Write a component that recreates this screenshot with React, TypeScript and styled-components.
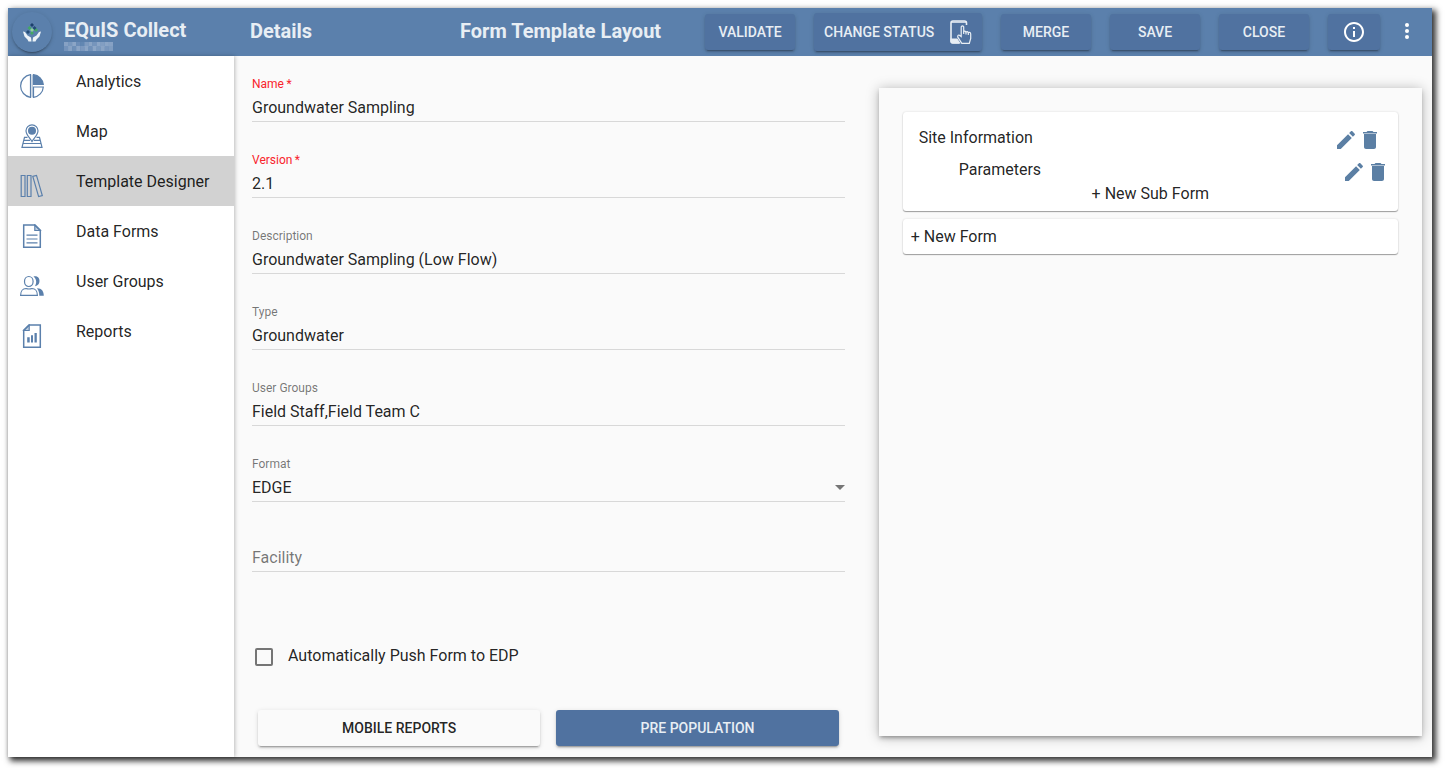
import React from 'react';
import styled, { createGlobalStyle, css } from 'styled-components';

const blue = '#5b80ac';
const buttonBlue = '#5072a0';
const ink = 'rgba(0, 0, 0, 0.87)';
const raised = `0 3px 1px -2px rgba(0, 0, 0, 0.2), 0 2px 2px 0 rgba(0, 0, 0, 0.14),
  0 1px 5px 0 rgba(0, 0, 0, 0.12)`;

const GlobalStyle = createGlobalStyle`
  *, *::before, *::after { box-sizing: border-box; }
  body {
    margin: 0;
    background: #fff;
    color: ${ink};
    font-family: Roboto, 'Liberation Sans', sans-serif;
    font-size: 16px;
  }
  button, input, select { font: inherit; color: inherit; }
`;

const Window = styled.div`
  display: flex;
  flex-direction: column;
  min-height: calc(100vh - 24px);
  margin: 8px 16px 16px 8px;
  background: #fafafa;
  box-shadow: 3px 3px 6px 1px rgba(0, 0, 0, 0.8);
`;

const Header = styled.header`
  display: flex;
  align-items: center;
  height: 48px;
  background: ${blue};
  color: #e8eef4;
`;

const Brand = styled.div`
  display: flex;
  align-items: center;
  flex: 0 0 226px;
  gap: 12px;
  padding-left: 4px;
`;

const Logo = styled.div`
  display: grid;
  place-items: center;
  width: 40px;
  height: 40px;
  border-radius: 50%;
  box-shadow: ${raised};
`;

const BrandText = styled.div`
  display: flex;
  flex-direction: column;
  gap: 1px;
  padding-top: 5px;
`;

const Title = styled.h1`
  margin: 0;
  font-size: 20px;
  line-height: 22px;
  font-weight: 700;
  white-space: nowrap;
`;

const SectionTitle = styled(Title).attrs({ as: 'h2' })`
  padding-bottom: 2px;
`;

const DetailsTitle = styled(SectionTitle)`
  flex: 0 0 226px;
  padding-left: 16px;
`;

const LayoutTitle = styled(SectionTitle)`
  flex: 1;
`;

const Actions = styled.div`
  display: flex;
  align-items: center;
  gap: 19px;
  padding-right: 17px;
`;

const Button = styled.button<{ $tone?: 'plain'; $width?: number }>`
  display: flex;
  align-items: center;
  justify-content: center;
  height: 36px;
  ${(p) => (p.$width ? css`width: ${p.$width}px;` : css`flex: 1;`)}
  padding: 0 10px;
  border: 0;
  border-radius: 3px;
  background: ${(p) => (p.$tone === 'plain' ? '#fafafa' : buttonBlue)};
  color: ${(p) => (p.$tone === 'plain' ? ink : '#e8eef4')};
  font-size: 14px;
  font-weight: 500;
  white-space: nowrap;
  box-shadow: ${raised};
`;

const StatusButton = styled(Button)`
  justify-content: space-between;
  height: 38px;
`;

const MenuButton = styled.button`
  display: grid;
  place-items: center;
  width: 16px;
  height: 26px;
  padding: 0 0 2px;
  border: 0;
  background: none;
`;

const Body = styled.div`
  display: flex;
  flex: 1;
`;

const Sidebar = styled.nav`
  flex: 0 0 226px;
  background: #fff;
  box-shadow: 1px 0 4px rgba(0, 0, 0, 0.25);
`;

const NavItem = styled.a<{ $active?: boolean }>`
  display: flex;
  align-items: center;
  gap: 32px;
  height: 50px;
  padding-left: 12px;
  background: ${(p) => (p.$active ? '#d2d2d2' : 'transparent')};
  color: ${ink};
  text-decoration: none;

  svg { margin-top: 10px; }
`;

const Main = styled.main`
  display: grid;
  grid-template-columns: 12fr 11fr;
  gap: 34px;
  flex: 1;
  padding: 0 10px 11px 18px;
`;

const Form = styled.form`
  display: flex;
  flex-direction: column;
  padding-top: 20px;
`;

const Field = styled.div`
  display: flex;
  flex-direction: column;
  margin-bottom: 30px;
`;

const Label = styled.label<{ $required?: boolean }>`
  font-size: 12px;
  line-height: 16px;
  color: ${(p) => (p.$required ? '#f8242c' : 'rgba(0, 0, 0, 0.54)')};
`;

const control = css`
  width: 100%;
  height: 30px;
  padding: 2px 0 0;
  border: 0;
  border-bottom: 1px solid #d8d8d8;
  border-radius: 0;
  outline: 0;
  background: transparent;
  appearance: none;
`;

const Input = styled.input`
  ${control}
  &::placeholder { color: rgba(0, 0, 0, 0.54); opacity: 1; }
`;

const SelectWrap = styled.div`
  display: grid;
  align-items: center;

  > * { grid-area: 1 / 1; }
  > svg { justify-self: end; pointer-events: none; }
`;

const Select = styled.select`${control}`;

const Facility = styled.div`
  margin: 10px 0 74px;
`;

const CheckRow = styled.label`
  display: flex;
  align-items: center;
  gap: 15px;
  padding-left: 3px;
  line-height: 20px;
`;

const Checkbox = styled.input.attrs({ type: 'checkbox' })`
  width: 18px;
  height: 18px;
  margin: 2px 0 0;
  border: 2px solid #757575;
  border-radius: 2px;
  background: transparent;
  appearance: none;
`;

const FormButtons = styled.div`
  display: flex;
  gap: 16px;
  margin-top: auto;
  padding: 0 6px;
`;

const Panel = styled.section`
  display: flex;
  flex-direction: column;
  gap: 8px;
  margin: 32px 0 10px;
  padding: 24px;
  background: #fafafa;
  box-shadow: 0 3px 3px -2px rgba(0, 0, 0, 0.2), 0 3px 4px 0 rgba(0, 0, 0, 0.14),
    0 1px 12px 0 rgba(0, 0, 0, 0.28);
`;

const Card = styled.div`
  display: flex;
  flex-direction: column;
  padding: 16px 8px 7px 16px;
  border-radius: 3px;
  background: #fff;
  box-shadow: 0 1px 1px rgba(0, 0, 0, 0.35), 0 0 2px rgba(0, 0, 0, 0.15);
`;

const FormRow = styled.div<{ $sub?: boolean }>`
  display: flex;
  height: 24px;
  margin-bottom: ${(p) => (p.$sub ? 0 : 8)}px;
  padding: ${(p) => (p.$sub ? '0 0 0 40px' : '0 8px 0 0')};
  line-height: 20px;
`;

const RowName = styled.span`
  flex: 1;
`;

const IconButton = styled.button`
  display: flex;
  width: 24px;
  height: 24px;
  padding: 0;
  border: 0;
  background: none;
`;

const LinkButton = styled.button`
  padding: 0;
  border: 0;
  background: none;
  line-height: 20px;
`;

const SubFormButton = styled(LinkButton)`
  align-self: center;
  margin-right: 8px;
`;

const NewFormButton = styled(LinkButton)`
  height: 35px;
  padding: 0 8px;
  border-radius: 3px;
  background: #fff;
  text-align: left;
  box-shadow: 0 1px 1px rgba(0, 0, 0, 0.35), 0 0 2px rgba(0, 0, 0, 0.15);
`;

const NavIcon = ({ children }: { children: React.ReactNode }) => (
  <svg width="24" height="24" viewBox="0 0 24 24" fill="none" stroke={blue} strokeWidth="1.2" aria-hidden="true">
    {children}
  </svg>
);

const navItems = [
  {
    label: 'Analytics',
    icon: (
      <>
        <path d="M10.5 .7A11.4 11.4 0 0 0 10.5 23.3Z" />
        <path d="M12.2 .7V23.3" strokeOpacity=".5" />
        <path d="M13.5 .7A11 11 0 0 1 23.3 10.5H13.5Z" fill={blue} />
        <path d="M13.5 13H23.3A11 11 0 0 1 13.5 23.3Z" />
      </>
    ),
  },
  {
    label: 'Map',
    icon: (
      <>
        <path d="M12 17.5C10 14 6 11 6 6.800A6 6 0 0 1 18 6.800C18 11 14 14 12 17.500Z" />
        <circle cx="12" cy="6.700" r="3.400" fill={blue} />
        <path d="M7.500 13.300H4.500L2 23.300H22L19.500 13.300H16.500M3.900 16.300H10M14 16.300H20.100M3 19.500H21" />
      </>
    ),
  },
  {
    label: 'Template Designer',
    active: true,
    icon: (
      <path d="M1.200 1.500H5V22.500H1.200ZM7.300 1.500H11V22.500H7.300ZM12.800 2.400L16.500 1.400L22.300 21.500L18.600 22.600Z" />
    ),
  },
  {
    label: 'Data Forms',
    icon: (
      <>
        <path d="M3.700 1H15L20.300 6.300V23.200H3.700Z" strokeWidth="1.500" />
        <path d="M14.800 1V6.500H20.300Z" fill={blue} fillOpacity=".4" />
        <path d="M6.500 11.200H17.500M6.500 15H17.500M6.500 18.800H17.500" />
      </>
    ),
  },
  {
    label: 'User Groups',
    icon: (
      <>
        <ellipse cx="8.800" cy="7.500" rx="4.300" ry="5" />
        <path d="M.6 21.400C.6 17 3 14.500 6 14.500Q9 15.500 12 14.500C15 14.500 17.400 17 17.400 21.400Z" />
        <path d="M13.500 2.600C17.500 1.500 20.300 4.500 19.300 8.500C18.800 10.700 17 12 15 12.200C17 9 16.500 5 13.500 2.600ZM17 14.200C21.500 14 23.800 17 23.800 21.800H19.300C19.300 18.500 18.700 16.500 17 14.200Z" fill={blue} stroke="none" />
      </>
    ),
  },
  {
    label: 'Reports',
    icon: (
      <>
        <path d="M9 1H20.300V23.200H3.700V6.300Z" strokeWidth="1.500" />
        <path d="M9.200 1V6.500H3.700Z" fill={blue} fillOpacity=".4" />
        <path d="M7.200 13.300H9.700V18.500H7.200ZM11 11.300H13V18.500H11ZM14.500 9H16.800V18.500H14.500Z" fill={blue} stroke="none" />
      </>
    ),
  },
];

const fields = [
  { id: 'name', label: 'Name', value: 'Groundwater Sampling', required: true },
  { id: 'version', label: 'Version', value: '2.1', required: true },
  { id: 'description', label: 'Description', value: 'Groundwater Sampling (Low Flow)' },
  { id: 'type', label: 'Type', value: 'Groundwater' },
  { id: 'groups', label: 'User Groups', value: 'Field Staff,Field Team C' },
];

const LogoMark = () => (
  <svg width="18" height="20" viewBox="0 0 18 20" aria-hidden="true">
    <path d="M0 9.500L2 10L4.500 13.500L8 15.500L8.500 19.500H5.500L4.500 17.500L1.500 14.500ZM18 9.500L16 10L13.500 13.500L10 15.500L9.500 19.500H12.500L13.500 17.500L16.500 14.500Z" fill="#edf3f8" />
    <path d="M9 1L11 3L9 5L7 3Z" fill="#1c3f6b" />
    <path d="M6.500 4L8.500 6L6.500 8L4.500 6ZM9 9L11 11L9 13L7 11ZM13 6L15 8L13 10L11 8Z" fill="#43a864" />
    <path d="M11.500 4L13.500 6L11.500 8L9.500 6ZM5 8L7 10L5 12L3 10Z" fill="#234b75" />
    <path d="M9 6L11 8L9 10L7 8Z" fill="#8fd09b" />
  </svg>
);

const mosaic = [
  '#86a1c4', '#7897bd', '#8ba5c6', '#6c8db7', '#6287b2', '#7e9bc0', '#8aa4c5', '#7695bc', '#8ca6c7', '#829ec2', '#8ba5c6', '#86a1c4',
  '#7493bb', '#87a2c4', '#6f90b8', '#8aa4c5', '#7c99bf', '#8ba5c6', '#7191b9', '#8ca6c7', '#7b99be', '#8aa4c5', '#7896bd', '#7f9cc0',
];

const MaskedLine = () => (
  <svg width="49" height="9" viewBox="0 0 48 9" preserveAspectRatio="none" aria-hidden="true">
    {mosaic.map((fill, i) => (
      <rect key={i} x={(i % 12) * 4} y={i < 12 ? 0 : 4} width="4" height="5" fill={fill} />
    ))}
  </svg>
);

const TouchTabletIcon = () => (
  <svg width="22" height="24" viewBox="0 0 22 24" fill="none" stroke="#e8eef4" strokeWidth="1.200" aria-hidden="true">
    <path d="M16.500 5V3Q16.500 1 14.500 1H3Q1 1 1 3V21Q1 23 3 23H9.500" strokeWidth="1.600" />
    <path d="M1 2.200H16.500" />
    <path d="M1 19H7L9.500 23H3Q1 23 1 21Z" fill="#e8eef4" />
    <path d="M11.200 16.500V6.800Q12.500 5 13.700 6.800V11.500Q15 10.400 16 12Q17.400 11 18.300 12.600Q20.500 11.800 20.700 14V18.500L19.300 23.300H11.800L7.800 17.200Q7.300 14.800 9.300 15.200Z" fill={buttonBlue} />
    <path d="M13.700 11.500V14M16 12V14.500M18.300 12.600V15" />
  </svg>
);

const Pencil = () => (
  <svg width="24" height="24" viewBox="0 0 24 24" fill="#5b7fa4" aria-hidden="true">
    <path d="M3 17.250V21h3.750L17.810 9.940l-3.750-3.750L3 17.250zM20.710 7.040c.39-.39.39-1.020 0-1.410l-2.340-2.340c-.39-.39-1.020-.39-1.410 0l-1.830 1.830 3.750 3.750 1.830-1.830z" />
  </svg>
);

const Trash = () => (
  <svg width="24" height="24" viewBox="0 0 24 24" fill="#5b7fa4" aria-hidden="true">
    <path d="M6 19c0 1.100.9 2 2 2h8c1.100 0 2-.9 2-2V6H6v13zM19 4h-3.500l-1-1h-5l-1 1H5v1.500h14V4z" />
  </svg>
);

const RowTools = ({ name }: { name: string }) => (
  <>
    <IconButton type="button" aria-label={`Edit ${name}`}><Pencil /></IconButton>
    <IconButton type="button" aria-label={`Delete ${name}`}><Trash /></IconButton>
  </>
);

export default function App() {
  return (
    <>
      <GlobalStyle />
      <Window>
        <Header>
          <Brand>
            <Logo><LogoMark /></Logo>
            <BrandText>
              <Title>EQuIS Collect</Title>
              <MaskedLine />
            </BrandText>
          </Brand>
          <DetailsTitle>Details</DetailsTitle>
          <LayoutTitle>Form Template Layout</LayoutTitle>
          <Actions>
            <Button type="button" $width={90}>VALIDATE</Button>
            <StatusButton type="button" $width={168}>
              CHANGE STATUS
              <TouchTabletIcon />
            </StatusButton>
            <Button type="button" $width={90}>MERGE</Button>
            <Button type="button" $width={90}>SAVE</Button>
            <Button type="button" $width={90}>CLOSE</Button>
            <Button type="button" $width={52} aria-label="Information">
              <svg width="24" height="24" viewBox="0 0 24 24" fill="#fff" aria-hidden="true">
                <path d="M11 7h2v2h-2zm0 4h2v6h-2zm1-9C6.480 2 2 6.480 2 12s4.480 10 10 10 10-4.480 10-10S17.520 2 12 2zm0 18c-4.410 0-8-3.590-8-8s3.590-8 8-8 8 3.590 8 8-3.590 8-8 8z" />
              </svg>
            </Button>
            <MenuButton type="button" aria-label="More options">
              <svg width="6" height="18" viewBox="0 0 6 18" fill="#fff" aria-hidden="true">
                <circle cx="3" cy="3" r="2" />
                <circle cx="3" cy="9" r="2" />
                <circle cx="3" cy="15" r="2" />
              </svg>
            </MenuButton>
          </Actions>
        </Header>
        <Body>
          <Sidebar>
            {navItems.map((item) => (
              <NavItem key={item.label} href="#" $active={item.active}>
                <NavIcon>{item.icon}</NavIcon>
                {item.label}
              </NavItem>
            ))}
          </Sidebar>
          <Main>
            <Form>
              {fields.map((f) => (
                <Field key={f.id}>
                  <Label htmlFor={f.id} $required={f.required}>
                    {f.label}
                    {f.required && '\u2009*'}
                  </Label>
                  <Input id={f.id} defaultValue={f.value} />
                </Field>
              ))}
              <Field>
                <Label htmlFor="format">Format</Label>
                <SelectWrap>
                  <Select id="format" defaultValue="EDGE">
                    <option>EDGE</option>
                  </Select>
                  <svg width="10" height="5" viewBox="0 0 10 5" fill="#757575" aria-hidden="true">
                    <path d="M0 0H10L5 5Z" />
                  </svg>
                </SelectWrap>
              </Field>
              <Facility>
                <Input placeholder="Facility" aria-label="Facility" />
              </Facility>
              <CheckRow>
                <Checkbox />
                Automatically Push Form to EDP
              </CheckRow>
              <FormButtons>
                <Button type="button" $tone="plain">MOBILE REPORTS</Button>
                <Button type="button">PRE POPULATION</Button>
              </FormButtons>
            </Form>
            <Panel>
              <Card>
                <FormRow>
                  <RowName>Site Information</RowName>
                  <RowTools name="Site Information" />
                </FormRow>
                <FormRow $sub>
                  <RowName>Parameters</RowName>
                  <RowTools name="Parameters" />
                </FormRow>
                <SubFormButton type="button">+ New Sub Form</SubFormButton>
              </Card>
              <NewFormButton type="button">+ New Form</NewFormButton>
            </Panel>
          </Main>
        </Body>
      </Window>
    </>
  );
}
